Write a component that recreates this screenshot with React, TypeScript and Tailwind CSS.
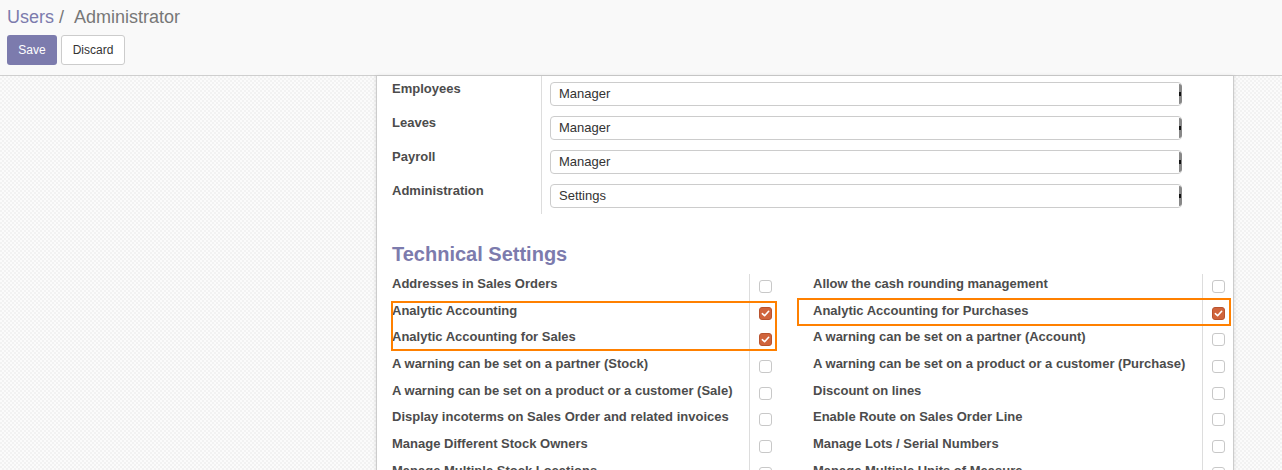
const groups = [
  { label: "Employees", value: "Manager" },
  { label: "Leaves", value: "Manager" },
  { label: "Payroll", value: "Manager" },
  { label: "Administration", value: "Settings" },
];

const left: [string, boolean][] = [
  ["Addresses in Sales Orders", false],
  ["Analytic Accounting", true],
  ["Analytic Accounting for Sales", true],
  ["A warning can be set on a partner (Stock)", false],
  ["A warning can be set on a product or a customer (Sale)", false],
  ["Display incoterms on Sales Order and related invoices", false],
  ["Manage Different Stock Owners", false],
  ["Manage Multiple Stock Locations", false],
];

const right: [string, boolean][] = [
  ["Allow the cash rounding management", false],
  ["Analytic Accounting for Purchases", true],
  ["A warning can be set on a partner (Account)", false],
  ["A warning can be set on a product or a customer (Purchase)", false],
  ["Discount on lines", false],
  ["Enable Route on Sales Order Line", false],
  ["Manage Lots / Serial Numbers", false],
  ["Manage Multiple Units of Measure", false],
];

function Check({ on }: { on: boolean }) {
  if (on)
    return (
      <span className="flex h-[13px] w-[13px] items-center justify-center rounded-[3px] bg-[#d0643c] border border-[#b9532e]">
        <svg width="9" height="9" viewBox="0 0 10 10">
          <path d="M1.5 5.2 L4 7.5 L8.5 2.5" fill="none" stroke="#fff" strokeWidth="1.8" strokeLinecap="round" strokeLinejoin="round" />
        </svg>
      </span>
    );
  return <span className="block h-[13px] w-[13px] rounded-[3px] border border-[#c8c8c8] bg-white" />;
}

function Col({ rows, labelW }: { rows: [string, boolean][]; labelW: string }) {
  return (
    <div className="flex flex-col">
      {rows.map(([t, on]) => (
        <div key={t} className="flex h-[26.7px]">
          <div className={`${labelW} pt-[1px] text-[13px] font-bold leading-[18px] text-[#4c4c4c] whitespace-nowrap`}>{t}</div>
          <div className="w-[32px] border-l border-[#ddd] pl-[9px] pt-[6px]">
            <Check on={on} />
          </div>
        </div>
      ))}
    </div>
  );
}

export default function App() {
  return (
    <div className="h-[470px] w-[1282px] overflow-hidden bg-white font-['Liberation_Sans',Arial,sans-serif]">
      <div className="h-[76px] border-b border-[#cfcfcf] bg-[#f9f9f9] px-[7px] pt-[5px]">
        <div className="text-[18px] leading-[24px]">
          <span className="text-[#7c7bad]">Users</span>
          <span className="text-[#777]"> / </span>
          <span className="ml-[5px] text-[#777]">Administrator</span>
        </div>
        <div className="mt-[6px] flex gap-[4px]">
          <button className="h-[30px] w-[50px] rounded-[3px] bg-[#7c7bad] text-[12px] text-white">Save</button>
          <button className="h-[30px] w-[64px] rounded-[3px] border border-[#ccc] bg-white text-[12px] text-[#333]">Discard</button>
        </div>
      </div>
      <div className="h-[394px] bg-[#f9f9f9] bg-[repeating-conic-gradient(#f2f2f2_0_25%,#fbfbfb_0_50%)] bg-[length:4px_4px]">
        <div className="relative ml-[376px] h-full w-[858px] border-x border-[#ccc] bg-white shadow-[0_0_4px_rgba(0,0,0,0.12)]">
          <div className="flex flex-col pl-[15px]">
            {groups.map((g) => (
              <div key={g.label} className="flex h-[34px]">
                <div className="w-[149px] pt-[4px] text-[13px] font-bold leading-[18px] text-[#4c4c4c]">{g.label}</div>
                <div className="border-l border-[#ddd] pl-[8px] pt-[6px]">
                  <div className="relative flex h-[24px] w-[632px] items-center rounded-[4px] border border-[#ccc] bg-white px-[8px] text-[13px] text-[#333]">
                    {g.value}
                    <span className="absolute right-[-1px] top-[1px] h-[20px] w-[3px] rounded-r-[3px] bg-[#888]" />
                    <span className="absolute right-[0px] top-[9px] h-[4px] w-[2px] bg-[#111]" />
                  </div>
                </div>
              </div>
            ))}
            <div className="ml-[149px] h-[2px] border-l border-[#ddd]" />
          </div>
          <div className="pl-[15px] pt-[24px] text-[20px] leading-[32px] text-[#7c7bad] font-bold">Technical Settings</div>
          <div className="flex pl-[15px] pt-[4px]">
            <Col rows={left} labelW="w-[357px]" />
            <div className="pl-[32px]">
              <Col rows={right} labelW="w-[389px]" />
            </div>
          </div>
          <div className="absolute left-[14px] top-[225px] h-[50px] w-[386px] border-2 border-[#ff8000]" />
          <div className="absolute left-[420px] top-[222px] h-[28px] w-[434px] border-2 border-[#ff8000]" />
        </div>
      </div>
    </div>
  );
}
